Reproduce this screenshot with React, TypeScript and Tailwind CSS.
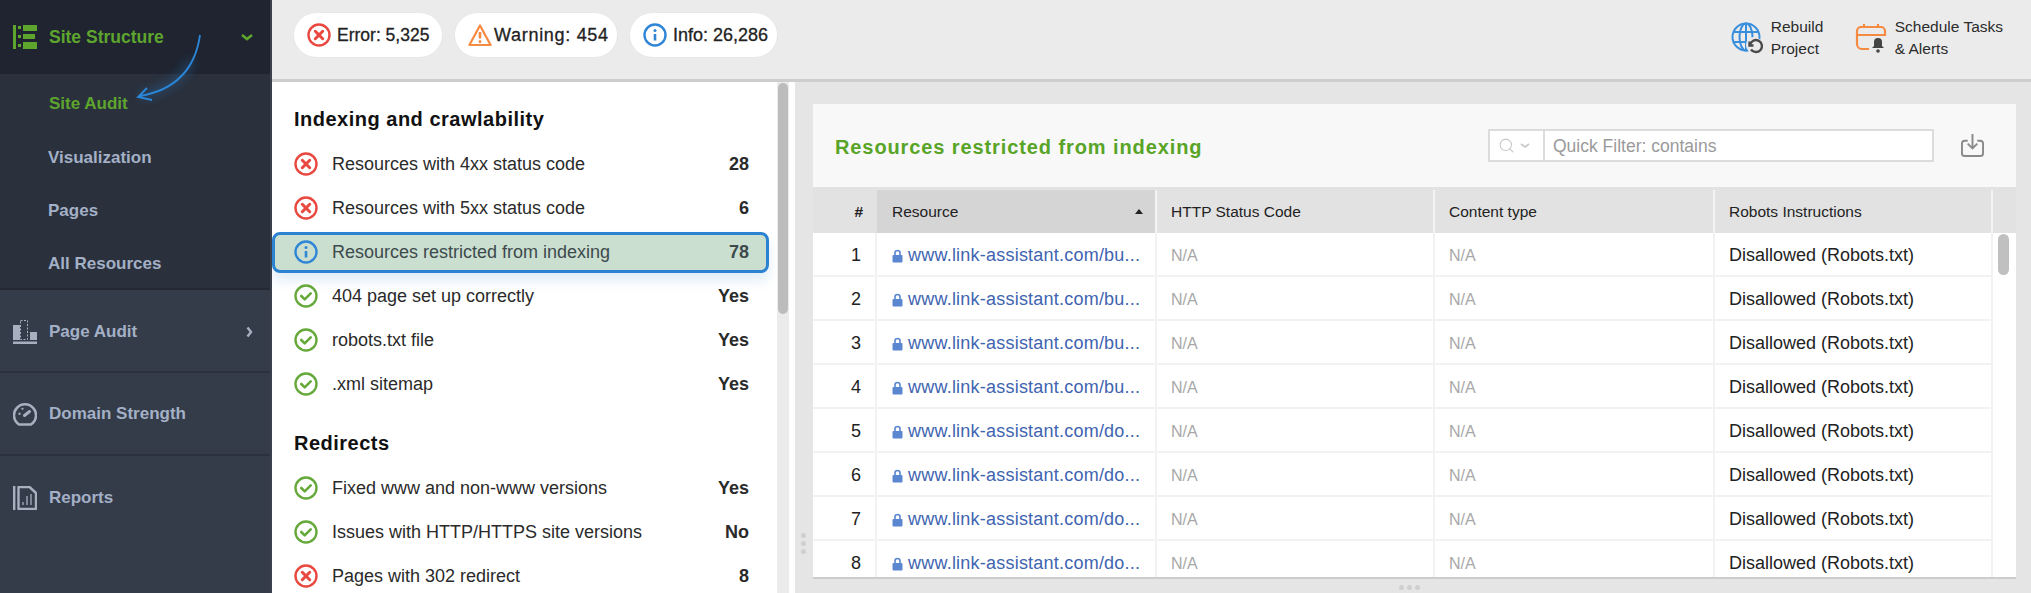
import { Search } from 'lucide-react';

const font = 'font-["Liberation_Sans",Arial,sans-serif]';

type Status = 'error' | 'info' | 'ok';

const StatusIcon = ({ kind, size = 24 }: { kind: Status; size?: number }) => {
  const color = kind === 'error' ? '#e8483f' : kind === 'info' ? '#2f86d6' : '#66a93a';
  return (
    <svg width={size} height={size} viewBox="0 0 24 24" fill="none" className="shrink-0">
      <circle cx="12" cy="12" r="10.5" stroke={color} strokeWidth="2.4" />
      {kind === 'error' && <path d="M8.3 8.3l7.4 7.4M15.7 8.3l-7.4 7.4" stroke={color} strokeWidth="3" strokeLinecap="round" />}
      {kind === 'info' && (
        <>
          <circle cx="12" cy="7.4" r="1.5" fill={color} />
          <path d="M12 11v6.5" stroke={color} strokeWidth="2.6" />
        </>
      )}
      {kind === 'ok' && <path d="M7.3 12l3.4 3.4 6-6" stroke={color} strokeWidth="2.6" strokeLinecap="round" strokeLinejoin="round" />}
    </svg>
  );
};

const WarningIcon = () => (
  <svg width="24" height="24" viewBox="0 0 24 24" fill="none" className="shrink-0">
    <path d="M12 2.5L22.6 22H1.4z" stroke="#f58a42" strokeWidth="2.2" strokeLinejoin="round" />
    <path d="M12 9v6.5" stroke="#f58a42" strokeWidth="2.6" />
    <circle cx="12" cy="18.5" r="1.5" fill="#f58a42" />
  </svg>
);

const StructureIcon = () => (
  <svg width="24" height="24" viewBox="0 0 24 24" fill="#5ea52e" className="shrink-0">
    <rect x="0" y="0" width="3" height="24" />
    <rect x="5" y="1" width="3" height="3" />
    <rect x="5" y="10" width="3" height="3" />
    <rect x="5" y="19" width="3" height="3" />
    <rect x="10" y="0" width="14" height="6" />
    <rect x="10" y="9" width="12" height="5" />
    <rect x="10" y="17" width="14" height="7" />
  </svg>
);

const PageAuditIcon = () => (
  <svg width="24" height="24" viewBox="0 0 24 24" fill="#a7b0bf" className="shrink-0">
    <rect x="0" y="5" width="7" height="15" />
    <rect x="7.5" y="0.5" width="7" height="19" fill="none" stroke="#a7b0bf" strokeDasharray="2 1.5" />
    <rect x="17" y="12" width="7" height="8" />
    <rect x="0" y="21.5" width="24" height="2.5" />
  </svg>
);

const GaugeIcon = () => (
  <svg width="24" height="24" viewBox="0 0 24 24" fill="none" stroke="#a7b0bf" className="shrink-0">
    <path d="M6 22.5a11 11 0 1 1 12 0z" strokeWidth="2.6" strokeLinejoin="round" />
    <path d="M11.5 13.5l5-4" strokeWidth="3" strokeLinecap="round" />
    <path d="M5.5 11.5l2 .5M9 6l1 1.5" strokeWidth="2" />
  </svg>
);

const ReportsIcon = () => (
  <svg width="24" height="24" viewBox="0 0 24 24" fill="none" stroke="#a7b0bf" className="shrink-0">
    <path d="M1.2 0v24" strokeWidth="2.4" />
    <path d="M5.5 1h11l6.5 6v16H5.5z" strokeWidth="2.4" strokeLinejoin="round" />
    <path d="M10 19v-3M14 19V10M18 19V8" strokeWidth="1.3" />
  </svg>
);

const GlobeIcon = () => (
  <svg width="32" height="32" viewBox="0 0 32 32" fill="none" className="shrink-0">
    <g stroke="#3a8fdc" strokeWidth="2">
      <circle cx="15" cy="15" r="13.5" />
      <ellipse cx="15" cy="15" rx="6.5" ry="13.5" />
      <path d="M15 1.5v27M2 10h26M2 20h26" />
    </g>
    <circle cx="23" cy="23" r="8" fill="#ebebeb" />
    <path d="M18.5 19.5v4h4M19 23a6 6 0 1 1 1 4.5" stroke="#4a4a4a" strokeWidth="2.4" fill="none" />
  </svg>
);

const CalendarIcon = () => (
  <svg width="32" height="32" viewBox="0 0 32 32" fill="none" className="shrink-0">
    <path d="M14 27H7a5 5 0 0 1-5-5V9a4 4 0 0 1 4-4h20a4 4 0 0 1 4 4v4H2" stroke="#f58a42" strokeWidth="2.2" />
    <path d="M9 2v4M23 2v4" stroke="#f58a42" strokeWidth="2.2" />
    <path d="M23 16a4 4 0 0 1 4 4v4l2 2H17l2-2v-4a4 4 0 0 1 4-4z" fill="#444" />
    <circle cx="23" cy="29" r="1.8" fill="#444" />
  </svg>
);

const ExportIcon = () => (
  <svg width="23" height="25" viewBox="0 0 24 26" fill="none" stroke="#8a8a8a" className="shrink-0">
    <path d="M7 8H4a3 3 0 0 0-3 3v10a3 3 0 0 0 3 3h16a3 3 0 0 0 3-3V11a3 3 0 0 0-3-3h-3" strokeWidth="2" />
    <path d="M12 1v14M7 11l5 5 5-5" strokeWidth="2" />
  </svg>
);

const Lock = () => (
  <svg width="11" height="14" viewBox="0 0 11 14" className="shrink-0">
    <path d="M3 6V4a2.5 2.5 0 0 1 5 0v2" fill="none" stroke="#5b86d0" strokeWidth="1.6" />
    <rect x="0.5" y="6" width="10" height="7.5" rx="1" fill="#5b86d0" />
  </svg>
);

const Pill = ({ icon, label, className }: { icon: React.ReactNode; label: string; className: string }) => (
  <div className={`flex h-11 items-center rounded-full bg-white pl-[13px] text-[#222] shadow-[0_0_2px_rgba(0,0,0,.05)] [-webkit-text-stroke:0.3px_#222] ${className}`}>
    {icon}
    <span className="whitespace-nowrap">{label}</span>
  </div>
);

const indexing: { kind: Status; label: string; value: string; selected?: boolean }[] = [
  { kind: 'error', label: 'Resources with 4xx status code', value: '28' },
  { kind: 'error', label: 'Resources with 5xx status code', value: '6' },
  { kind: 'info', label: 'Resources restricted from indexing', value: '78', selected: true },
  { kind: 'ok', label: '404 page set up correctly', value: 'Yes' },
  { kind: 'ok', label: 'robots.txt file', value: 'Yes' },
  { kind: 'ok', label: '.xml sitemap', value: 'Yes' },
];

const redirects: { kind: Status; label: string; value: string; selected?: boolean }[] = [
  { kind: 'ok', label: 'Fixed www and non-www versions', value: 'Yes' },
  { kind: 'ok', label: 'Issues with HTTP/HTTPS site versions', value: 'No' },
  { kind: 'error', label: 'Pages with 302 redirect', value: '8' },
];

const AuditRow = ({ kind, label, value, selected }: { kind: Status; label: string; value: string; selected?: boolean }) => (
  <div className="flex h-11 shrink-0 items-center">
    <div
      className={
        selected
          ? 'flex h-[41px] w-[497px] items-center rounded-[8px] border-[3px] border-[#2b82d0] bg-[#cbdfd1] pl-[19px] pr-[17px] text-[#3d4a4c] shadow-[0_8px_12px_rgba(43,130,208,.14)]'
          : 'flex h-[41px] w-[497px] items-center pl-[22px] pr-5 text-[#2a2a2a]'
      }
    >
      <StatusIcon kind={kind} />
      <span className="ml-[14px] flex-1 text-[18px]">{label}</span>
      <span className="text-[18px] font-bold">{value}</span>
    </div>
  </div>
);

const rows = ['bu', 'bu', 'bu', 'bu', 'do', 'do', 'do', 'do'];

const NavSection = ({ icon, label, chevron, className = '' }: { icon: React.ReactNode; label: string; chevron?: boolean; className?: string }) => (
  <div className={`flex h-[83px] items-center border-b-2 border-[#2b313d] pl-[13px] pr-[17px] ${className}`}>
    {icon}
    <span className="ml-3 flex-1 text-[17px] font-bold text-[#a3b0c6]">{label}</span>
    {chevron && (
      <svg width="7" height="12" viewBox="0 0 7 12" fill="none">
        <path d="M1.5 1.5l3.5 4.5-3.5 4.5" stroke="#a7b0bf" strokeWidth="2.4" />
      </svg>
    )}
  </div>
);

export default function App() {
  return (
    <div className={`flex h-[593px] w-[2031px] overflow-hidden bg-[#e5e5e5] ${font}`}>
      {/* sidebar */}
      <aside className="relative flex w-[272px] shrink-0 flex-col border-r-2 border-[#3a404c] bg-[#343b49]">
        <div className="flex h-[74px] items-center bg-[#1f2430] pl-[13px] pr-[16px]">
          <StructureIcon />
          <span className="ml-3 flex-1 text-[17.5px] font-bold text-[#5ea52e]">Site Structure</span>
          <svg width="14" height="9" viewBox="0 0 14 9" fill="none">
            <path d="M2 2l5 4 5-4" stroke="#5ea52e" strokeWidth="2.6" />
          </svg>
        </div>
        <div className="flex h-[216px] flex-col border-b-2 border-[#232833] bg-[#2a303c] pl-[48px] pt-[3px] text-[17px] font-bold text-[#a3b0c6]">
          <div className="flex h-[53px] items-center pl-px text-[#5ea52e]">Site Audit</div>
          <div className="flex h-[53px] translate-y-[2px] items-center">Visualization</div>
          <div className="flex h-[53px] translate-y-[2px] items-center">Pages</div>
          <div className="flex h-[53px] translate-y-[2px] items-center">All Resources</div>
        </div>
        <NavSection icon={<PageAuditIcon />} label="Page Audit" chevron className="pt-[2px]" />
        <NavSection icon={<GaugeIcon />} label="Domain Strength" />
        <div className="flex h-[83px] items-center pl-[13px]">
          <ReportsIcon />
          <span className="ml-3 text-[17px] font-bold text-[#a3b0c6]">Reports</span>
        </div>
        {/* annotation arrow */}
        <svg width="90" height="80" viewBox="0 0 90 80" fill="none" className="absolute left-[130px] top-[30px] overflow-visible">
          <path d="M62 30C52 50 35 60 10 66" stroke="#2b86d8" strokeOpacity=".22" strokeWidth="10" className="blur-[4px]" />
          <path d="M70 5C65 40 45 60 10 66M17 58l-9 9 14 3" stroke="#2b86d8" strokeWidth="1.8" />
        </svg>
      </aside>

      <div className="flex min-w-0 flex-1 flex-col">
        {/* top bar */}
        <header className="flex h-[82px] shrink-0 items-start border-b-[3px] border-[#cdcdcd] bg-[#ebebeb] pl-[22px] pr-[28px] pt-[13px]">
          <div className="flex gap-[13px]">
            <Pill icon={<StatusIcon kind="error" />} label="Error: 5,325" className="w-[148px] gap-[6px] text-[17.5px]" />
            <Pill icon={<WarningIcon />} label="Warning: 454" className="w-[162px] gap-[2px] text-[18px] tracking-[.7px]" />
            <Pill icon={<StatusIcon kind="info" />} label="Info: 26,286" className="w-[147px] gap-[6px] text-[18px]" />
          </div>
          <div className="ml-auto flex items-center pt-[3px] text-[15.5px] leading-[22px] text-[#2c2c2c]">
            <GlobeIcon />
            <div className="ml-2 w-[84px]">Rebuild<br />Project</div>
            <CalendarIcon />
            <div className="ml-2">Schedule Tasks<br />&amp; Alerts</div>
          </div>
        </header>

        <div className="flex min-h-0 flex-1">
          {/* audit list */}
          <section className="relative flex w-[523px] shrink-0 flex-col overflow-hidden bg-white pt-[22px]">
            <h2 className="flex h-[30px] shrink-0 items-center pl-[22px] text-[20px] font-bold tracking-[.5px] text-[#111]">Indexing and crawlability</h2>
            <div className="mt-2 flex flex-col">
              {indexing.map((r) => <AuditRow key={r.label} {...r} />)}
            </div>
            <h2 className="mt-[22px] flex h-[30px] shrink-0 items-center pl-[22px] text-[20px] font-bold tracking-[.5px] text-[#111]">Redirects</h2>
            <div className="mt-2 flex flex-col">
              {redirects.map((r) => <AuditRow key={r.label} {...r} />)}
            </div>
            <div className="absolute bottom-0 left-[505px] top-0 w-3 bg-[#ebebeb]">
              <div className="ml-px mt-px h-[231px] w-[10px] rounded-full bg-[#bcbcbc]" />
            </div>
          </section>

          {/* table panel */}
          <section className="relative flex min-w-0 flex-1 flex-col pb-[14px] pl-[18px] pr-[15px] pt-[22px]">
            <div className="flex min-h-0 flex-1 flex-col overflow-hidden border-b-2 border-[#cccccc] bg-white">
              <div className="flex h-[83px] shrink-0 items-center bg-[#f8f8f8] pl-[22px] pr-[32px] shadow-[0_1px_2px_rgba(0,0,0,.2)]">
                <h3 className="flex-1 pt-[2px] text-[20px] font-bold tracking-[.9px] text-[#58a427]">Resources restricted from indexing</h3>
                <div className="flex h-[33px] w-[446px] items-center border-2 border-[#dcdcdc] bg-white text-[17.5px] text-[#9a9a9a]">
                  <div className="flex h-full w-[55px] items-center gap-[5px] border-r-2 border-[#dcdcdc] pl-2">
                    <Search size={17} className="text-[#c8c8c8]" strokeWidth={1.5} />
                    <svg width="10" height="6" viewBox="0 0 10 6" fill="none"><path d="M1 1l4 3 4-3" stroke="#c8c8c8" strokeWidth="1.6" /></svg>
                  </div>
                  <span className="ml-2 pt-px">Quick Filter: contains</span>
                </div>
                <div className="ml-[27px]"><ExportIcon /></div>
              </div>

              <div className="relative flex min-h-0 flex-1 flex-col overflow-hidden">
                <div className="grid h-[46px] shrink-0 grid-cols-[64px_280px_278px_280px_278px_23px] bg-[#e2e2e2] pt-[3px] text-[15.5px] text-[#222]">
                  <div className="flex items-center justify-end pr-[14px] font-bold">#</div>
                  <div className="flex items-center justify-between border-r-2 border-[#f4f4f4] bg-[#d5d5d5] pl-[15px] pr-[12px]">
                    Resource
                    <svg width="8" height="5" viewBox="0 0 8 5"><path d="M0 5l4-5 4 5z" fill="#222" /></svg>
                  </div>
                  <div className="flex items-center border-r-2 border-[#f4f4f4] pl-[14px]">HTTP Status Code</div>
                  <div className="flex items-center border-r-2 border-[#f4f4f4] pl-[14px]">Content type</div>
                  <div className="flex items-center border-r-2 border-[#f4f4f4] pl-[14px]">Robots Instructions</div>
                  <div />
                </div>
                {rows.map((r, i) => (
                  <div key={i} className="grid h-11 shrink-0 grid-cols-[64px_280px_278px_280px_278px_23px] text-[16px]">
                    <div className="flex items-center justify-end border-b-2 border-r-2 border-[#f2f2f2] pt-[3px] pr-[14px] text-[18px] text-[#222]">{i + 1}</div>
                    <div className="flex items-center gap-[5px] border-b-2 border-r-2 border-[#f2f2f2] pl-[15px] pt-[3px] text-[#4064b0]">
                      <Lock />
                      <span className="whitespace-nowrap text-[18px] tracking-[.22px]">www.link-assistant.com/{r}...</span>
                    </div>
                    <div className="flex items-center border-b-2 border-r-2 border-[#f2f2f2] pl-[14px] pt-[3px] text-[#a8a8a8]">N/A</div>
                    <div className="flex items-center border-b-2 border-r-2 border-[#f2f2f2] pl-[14px] pt-[3px] text-[#a8a8a8]">N/A</div>
                    <div className="flex items-center border-b-2 border-r-2 border-[#f2f2f2] pl-[14px] pt-[3px] text-[18px] text-[#222]">Disallowed (Robots.txt)</div>
                    <div />
                  </div>
                ))}
                <div className="absolute right-[7px] top-[47px] h-[41px] w-[11px] rounded-full bg-[#c0c0c0]" />
              </div>
            </div>
            {/* drag handles */}
            <div className="absolute left-[6px] top-[451px] flex flex-col gap-[3px]">
              <span className="h-[5px] w-[5px] rounded-full bg-[#cfcfcf]" />
              <span className="h-[5px] w-[5px] rounded-full bg-[#cfcfcf]" />
              <span className="h-[5px] w-[5px] rounded-full bg-[#cfcfcf]" />
            </div>
            <div className="absolute bottom-[3px] left-[604px] flex gap-[3px]">
              <span className="h-[5px] w-[5px] rounded-full bg-[#cfcfcf]" />
              <span className="h-[5px] w-[5px] rounded-full bg-[#cfcfcf]" />
              <span className="h-[5px] w-[5px] rounded-full bg-[#cfcfcf]" />
            </div>
          </section>
        </div>
      </div>
    </div>
  );
}
